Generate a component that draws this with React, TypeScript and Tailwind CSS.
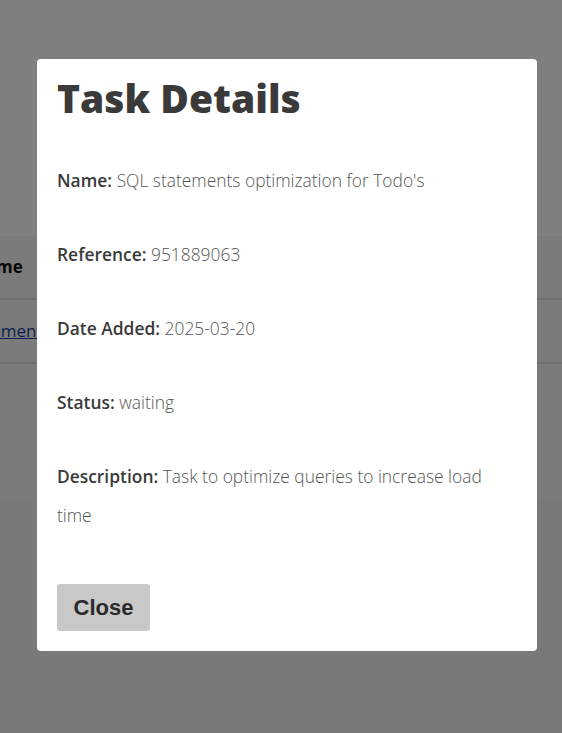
import { useState } from 'react';

const task = {
  name: "SQL statements optimization for Todo's",
  reference: '951889063',
  dateAdded: '2025-03-20',
  status: 'waiting',
  description: 'Task to optimize queries to increase load time',
};

function Field({ label, value }: { label: string; value: string }) {
  return (
    <p className="mb-[35px] text-[17.4px] leading-[39px]">
      <span className="font-semibold text-[#3a3a3a]">{label}:</span>{' '}
      <span className="font-light text-[#555]">{value}</span>
    </p>
  );
}

export default function App() {
  const [open, setOpen] = useState(true);

  return (
    <div className="relative h-[733px] w-[562px] overflow-hidden bg-white font-['Open_Sans',sans-serif] text-[#222]">
      {/* page behind the modal */}
      <div className="pt-[236px]">
        <div className="bg-[#f6f6f6]">
          <div className="flex h-[64px] items-center border-b-2 border-[#dedede] -ml-[28px]">
            <span className="text-[17px] font-bold text-[#111]">Name</span>
          </div>
          <div className="flex h-[64px] items-center border-b-2 border-[#dedede] -ml-[44px]">
            <a href="#" className="text-[17px] text-[#1a3fa8] underline">Implement</a>
          </div>
          <div className="h-[134px]" />
        </div>
        <div className="h-[240px] bg-[#f3f3f3]" />
      </div>

      {open && (
        <div className="absolute inset-0 bg-black/50">
          <div className="ml-[37px] mt-[59px] w-[500px] rounded-[4px] bg-white px-[20px] pb-[20px] pt-[20px]">
            <h2 className="mb-[44px] text-[39px] font-extrabold leading-[38px] text-[#3a3a3a]">
              Task Details
            </h2>
            <Field label="Name" value={task.name} />
            <Field label="Reference" value={task.reference} />
            <Field label="Date Added" value={task.dateAdded} />
            <Field label="Status" value={task.status} />
            <Field label="Description" value={task.description} />
            <div className="pt-[14px]">
              <button
                onClick={() => setOpen(false)}
                className="block h-[47px] w-[93px] rounded-[3px] bg-[#c8c8c8] font-['Liberation_Sans',Arial,sans-serif] text-[22px] font-bold text-[#2a2a2a]"
              >
                Close
              </button>
            </div>
          </div>
        </div>
      )}
    </div>
  );
}
